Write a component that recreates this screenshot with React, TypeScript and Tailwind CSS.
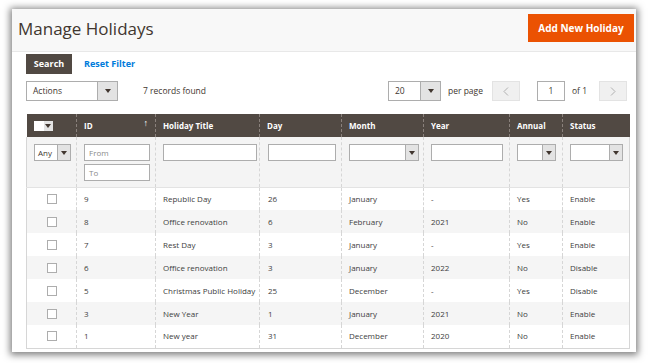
import React from "react";

const font = { fontFamily: '"Open Sans", "Noto Sans", sans-serif' };

function Arrow({ className = "" }: { className?: string }) {
  return (
    <svg width="6" height="4" viewBox="0 0 6 4" className={className}>
      <path d="M0 0 L6 0 L3 4 Z" fill="#41362f" />
    </svg>
  );
}

function SelectBox({ w, arrowW, label, h = 20, text = "text-[8.5px]", pl = "pl-[6px]" }: { w: string; arrowW: string; label?: string; h?: string | number; text?: string; pl?: string }) {
  return (
    <div className={`flex ${w} border border-[#adadad] bg-white shrink-0`} style={{ height: h }}>
      <div className={`flex-1 flex items-center ${pl} ${text} text-[#41362f]`}>{label}</div>
      <div className={`${arrowW} flex items-center justify-center bg-[#e3e3e3] border-l border-[#adadad]`}>
        <Arrow />
      </div>
    </div>
  );
}

const rows = [
  ["9", "Republic Day", "26", "January", "-", "Yes", "Enable"],
  ["8", "Office renovation", "6", "February", "2021", "No", "Enable"],
  ["7", "Rest Day", "3", "January", "-", "Yes", "Enable"],
  ["6", "Office renovation", "3", "January", "2022", "No", "Disable"],
  ["5", "Christmas Public Holiday", "25", "December", "-", "Yes", "Disable"],
  ["3", "New Year", "1", "January", "2021", "No", "Enable"],
  ["1", "New year", "31", "December", "2020", "No", "Enable"],
];

const widths = [50, 79, 104, 82, 82, 86, 53, 67];

function Input({ w }: { w: string }) {
  return <div className={`${w} h-[17px] border border-[#adadad] bg-white`} />;
}

export default function App() {
  return (
    <div className="w-[650px] h-[363px] bg-white overflow-hidden pt-[9px] pl-[12px]" style={font}>
      <div className="w-[624px] h-[343px] bg-white shadow-[0_1px_7px_2px_rgba(0,0,0,0.5)] flex flex-col">
        <div className="h-[43px] bg-[#f8f8f8] border-b border-[#e8e8e8] flex justify-between pl-[6px] pr-[2px] shrink-0">
          <div className="text-[17px] leading-none text-[#41362f] pt-[11px]">Manage Holidays</div>
          <div className="mt-[5px] w-[106px] h-[28px] bg-[#eb5202] text-white font-bold text-[10px] flex items-center justify-center">
            Add New Holiday
          </div>
        </div>
        <div className="pl-[14px] pr-[7px]">
          <div className="flex items-center mt-[2px] h-[20px]">
            <div className="w-[46px] h-[20px] bg-[#514943] text-white font-bold text-[9px] flex items-center justify-center">Search</div>
            <div className="ml-[12px] text-[9px] font-bold text-[#007bdb]">Reset Filter</div>
          </div>
          <div className="flex items-center mt-[7px] h-[20px]">
            <SelectBox w="w-[92px]" arrowW="w-[20px]" label="Actions" />
            <div className="ml-[25px] text-[8.5px] text-[#41362f]">7 records found</div>
            <div className="ml-auto mr-[2px] flex items-center">
              <SelectBox w="w-[53px]" arrowW="w-[20px]" label="20" />
              <div className="ml-[7px] w-[36px] text-[8.5px] text-[#41362f] whitespace-nowrap">per page</div>
              <div className="ml-[8px] w-[28px] h-[20px] bg-[#f0f0f0] border border-[#e3e3e3] flex items-center justify-center">
                <svg width="6" height="9" viewBox="0 0 6 9"><path d="M5 0.5 L1 4.5 L5 8.5" fill="none" stroke="#b0b0b0" strokeWidth="1" /></svg>
              </div>
              <div className="ml-[17px] w-[28px] h-[20px] bg-white border border-[#adadad] flex items-center justify-center text-[8.5px] text-[#41362f]">1</div>
              <div className="ml-[7px] w-[15px] text-[8.5px] text-[#41362f] whitespace-nowrap">of 1</div>
              <div className="ml-[12px] w-[28px] h-[20px] bg-[#f0f0f0] border border-[#e3e3e3] flex items-center justify-center">
                <svg width="6" height="9" viewBox="0 0 6 9"><path d="M1 0.5 L5 4.5 L1 8.5" fill="none" stroke="#b0b0b0" strokeWidth="1" /></svg>
              </div>
            </div>
          </div>
          <table className="mt-[13px] w-[603px] table-fixed border-collapse text-[8px] text-[#303030]">
            <colgroup>
              {widths.map((w, i) => (
                <col key={i} style={{ width: w }} />
              ))}
            </colgroup>
            <thead>
              <tr className="h-[23px] bg-[#514943] text-white font-bold text-left">
                <th className="border-r border-dashed border-[#8a817c] px-[7px]">
                  <div className="flex w-[19px] h-[10px] bg-white">
                    <div className="w-[10px]" />
                    <div className="flex-1 bg-[#e3e3e3] flex items-center justify-center"><Arrow /></div>
                  </div>
                </th>
                <th className="border-r border-dashed border-[#8a817c] px-[7px]">
                  <div className="flex justify-between items-center">
                    <span>ID</span>
                    <span className="font-normal text-[9px] -mt-[6px]">↑</span>
                  </div>
                </th>
                <th className="border-r border-dashed border-[#8a817c] px-[7px]">Holiday Title</th>
                <th className="border-r border-dashed border-[#8a817c] px-[7px]">Day</th>
                <th className="border-r border-dashed border-[#8a817c] px-[7px]">Month</th>
                <th className="border-r border-dashed border-[#8a817c] px-[7px]">Year</th>
                <th className="border-r border-dashed border-[#8a817c] px-[7px]">Annual</th>
                <th className="px-[7px]">Status</th>
              </tr>
            </thead>
            <tbody>
              <tr className="h-[50px] bg-[#f4f4f4] align-top border-b border-[#e3e3e3] border-x border-x-[#d6d6d6]">
                <td className="border-r border-dashed border-[#d6d6d6] pl-[7px] pt-[7px]">
                  <SelectBox w="w-[37px]" arrowW="w-[13px]" label="Any" h={17} text="text-[8px]" pl="pl-[3px]" />
                </td>
                <td className="border-r border-dashed border-[#d6d6d6] pl-[7px] pt-[7px]">
                  <div className="w-[66px] h-[17px] border border-[#adadad] bg-white text-[8px] text-[#8a8a8a] flex items-center pl-[4px]">From</div>
                  <div className="mt-[3px] w-[66px] h-[17px] border border-[#adadad] bg-white text-[8px] text-[#8a8a8a] flex items-center pl-[4px]">To</div>
                </td>
                <td className="border-r border-dashed border-[#d6d6d6] pl-[7px] pt-[7px]"><Input w="w-[94px]" /></td>
                <td className="border-r border-dashed border-[#d6d6d6] pl-[8px] pt-[7px]"><Input w="w-[68px]" /></td>
                <td className="border-r border-dashed border-[#d6d6d6] pl-[7px] pt-[7px]">
                  <SelectBox w="w-[70px]" arrowW="w-[13px]" h={17} />
                </td>
                <td className="border-r border-dashed border-[#d6d6d6] pl-[7px] pt-[7px]"><Input w="w-[72px]" /></td>
                <td className="border-r border-dashed border-[#d6d6d6] pl-[7px] pt-[7px]">
                  <SelectBox w="w-[39px]" arrowW="w-[13px]" h={17} />
                </td>
                <td className="pl-[7px] pt-[7px]">
                  <SelectBox w="w-[53px]" arrowW="w-[13px]" h={17} />
                </td>
              </tr>
              {rows.map((r, i) => (
                <tr key={i} className={`h-[23px] border-x border-[#d6d6d6] ${i === rows.length - 1 ? "border-b" : ""} ${i % 2 === 1 ? "bg-[#f5f5f5]" : "bg-white"}`}>
                  <td className="border-r border-dashed border-[#d6d6d6]">
                    <div className="mx-auto w-[10px] h-[10px] border border-[#adadad] bg-white" />
                  </td>
                  {r.map((c, j) => (
                    <td key={j} className={`${j < 6 ? "border-r border-dashed border-[#d6d6d6]" : ""} ${j === 2 ? "pl-[8px]" : "pl-[7px]"} whitespace-nowrap text-[#404040]`}>
                      {c}
                    </td>
                  ))}
                </tr>
              ))}
            </tbody>
          </table>
        </div>
      </div>
    </div>
  );
}
